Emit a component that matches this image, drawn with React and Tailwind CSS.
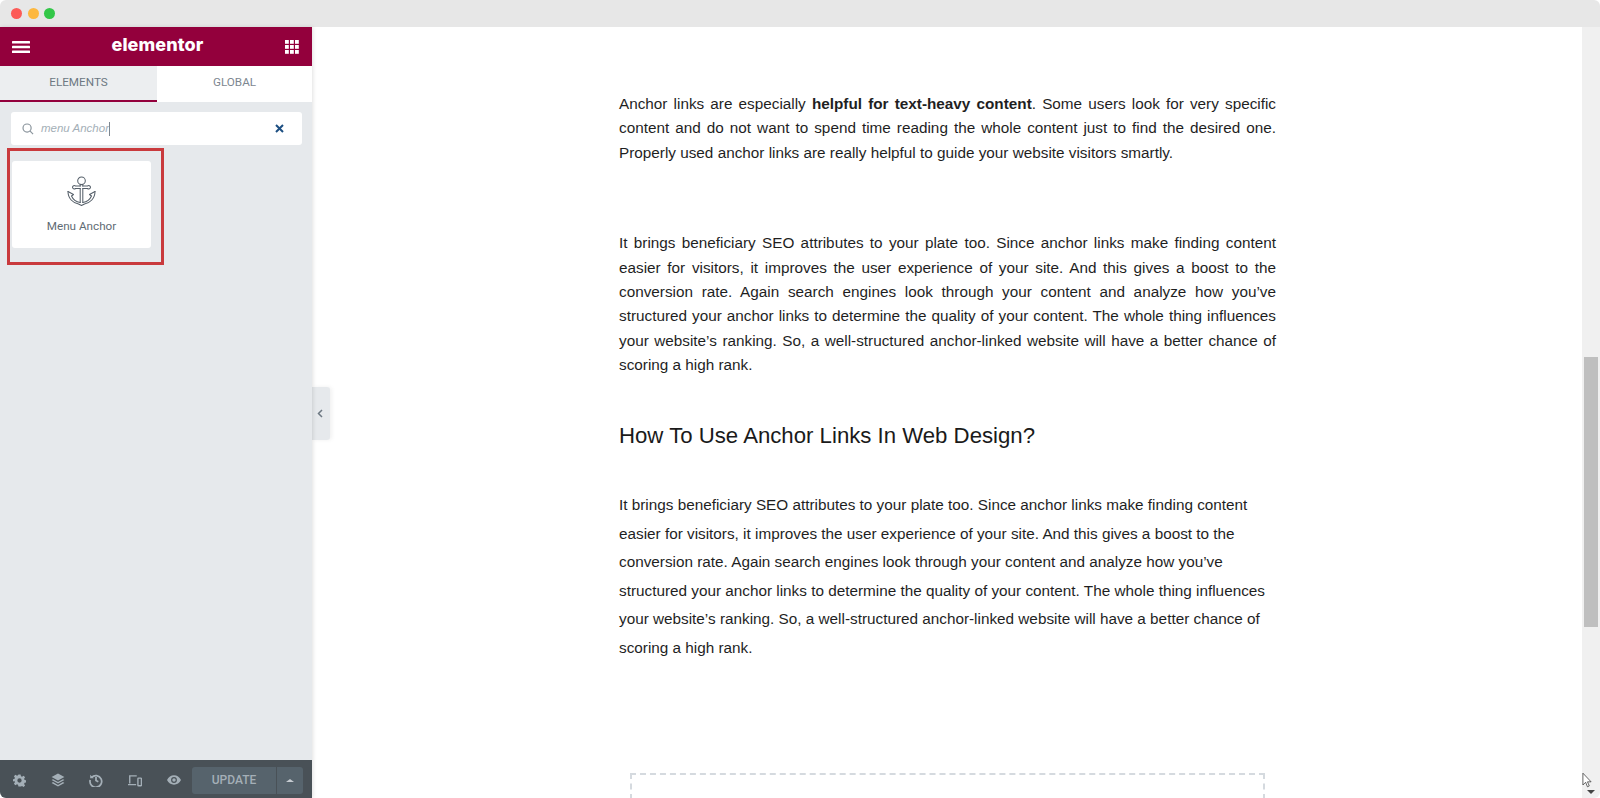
import React from "react";

function JLine({ children, last }) {
  return (
    <div className={last ? "h-[24.4px] whitespace-nowrap" : "h-[24.4px] [text-align:justify] [text-align-last:justify]"}>{children}</div>
  );
}

function FooterIcon({ children }) {
  return <div className="w-[38.6px] h-full flex items-center justify-center pt-[2px] text-[#a4afb7]">{children}</div>;
}

export default function App() {
  return (
    <div className="relative w-[1600px] h-[798px] overflow-hidden bg-white rounded-[6px] flex flex-col font-['Liberation_Sans',Arial,sans-serif]">
      <div className="h-[27px] shrink-0 bg-[#e7e7e7] flex items-center gap-[5.7px] pl-[11px] pb-[1px]">
        <span className="w-[11px] h-[11px] rounded-full bg-[#fc5b57]" />
        <span className="w-[11px] h-[11px] rounded-full bg-[#fdb83f]" />
        <span className="w-[11px] h-[11px] rounded-full bg-[#33c748]" />
      </div>
      <div className="flex-1 flex min-h-0">
        <aside className="w-[312px] shrink-0 bg-[#e6e9ec] flex flex-col shadow-[1px_0_4px_rgba(0,0,0,0.12)] z-10">
          <div className="h-[39px] shrink-0 bg-[#93003c] flex items-center justify-between pl-[12px] pr-[13px] text-white">
            <svg width="18" height="12" viewBox="0 0 18 12" fill="#fff"><rect y="0" width="18" height="2.4" rx="0.5" /><rect y="4.800" width="18" height="2.400" rx="0.5" /><rect y="9.600" width="18" height="2.400" rx="0.5" /></svg>
            <span className="text-[18px] font-extrabold tracking-[0.1px] leading-none font-['Inter',sans-serif] -mt-[4px]">elementor</span>
            <svg width="14" height="14" viewBox="0 0 14 14" fill="#fff">
              {[0, 5, 10].map((y) => [0, 5, 10].map((x) => <rect key={x + "-" + y} x={x} y={y} width="3.8" height="3.8" />))}
            </svg>
          </div>
          <div className="h-[36px] shrink-0 flex text-[11.7px] font-['Roboto',sans-serif] text-[#6d7882]">
            <div className="w-[157px] flex items-center justify-center border-b-2 border-[#93003c] bg-[#eceef0]">ELEMENTS</div>
            <div className="w-[155px] flex items-center justify-center border-b-2 border-transparent bg-white text-[#7d8790]">GLOBAL</div>
          </div>
          <div className="mt-[10px] ml-[11px] mr-[10px] h-[33px] shrink-0 bg-white rounded-[3px] flex items-center pl-[11px] pr-[18px]">
            <svg width="12" height="12" viewBox="0 0 13 13" fill="none" stroke="#8a949c" strokeWidth="1.3"><circle cx="5.500" cy="5.500" r="4.400" /><path d="M8.800 8.800L12 12" /></svg>
            <span className="ml-[7px] text-[11.5px] italic text-[#a4afb7]">menu Anchor</span>
            <span className="w-px h-[14px] bg-[#7d8790]" />
            <svg className="ml-auto" width="9" height="9" viewBox="0 0 9 9" fill="none" stroke="#1d4f82" strokeWidth="2"><path d="M1 1l7 7M8 1l-7 7" /></svg>
          </div>
          <div className="relative mt-[3px] ml-[7px] w-[157px] h-[117px] shrink-0 border-[3px] border-[#c93a3d] bg-[#e6e9ec] pt-[10px] pl-[2px]">
            <div className="w-[139px] h-[87px] bg-white rounded-[3px] flex flex-col items-center pt-[15px]">
              <svg width="29" height="30" viewBox="0 0 29 30" fill="none" stroke="#56606a" strokeWidth="1.050" strokeLinejoin="round" strokeLinecap="round">
                <circle cx="14.500" cy="4.800" r="3.800" />
                <path d="M13.200 8.500V10M15.800 8.500V10" />
                <path d="M13.200 12.500V26.500M15.800 12.500V26.500" />
                <path d="M13.200 10H8.500a1.800 1.800 0 0 0-3 1.300 1.800 1.800 0 0 0 3 1.200H13.200" />
                <path d="M15.800 10H20.500a1.800 1.800 0 0 1 3 1.300 1.800 1.800 0 0 1-3 1.200H15.800" />
                <path d="M1 15.500l5.500 3-2 1.500c1.500 3.500 4.500 5.800 8.700 6.500" />
                <path d="M28 15.500l-5.500 3 2 1.500c-1.500 3.500-4.500 5.800-8.700 6.500" />
                <path d="M1 15.500c0 7 5 11.500 10.500 12.500l3 1.500 3-1.500c5.500-1 10.500-5.500 10.500-12.500" />
              </svg>
              <span className="mt-[12px] text-[11.7px] font-['Roboto',sans-serif] text-[#5f6b74]">Menu Anchor</span>
            </div>
          </div>
          <div className="mt-auto h-[38px] shrink-0 bg-[#495157] flex items-center">
            <div className="flex h-full items-center">
              <FooterIcon>
                <svg width="13" height="13" viewBox="0 0 24 24" fill="currentColor"><path fillRule="evenodd" d="M10 1h4l.7 3.200 2 .9 2.800-1.800 2.800 2.800-1.800 2.800.9 2 3.200.7v4l-3.200.7-.9 2 1.800 2.800-2.800 2.800-2.800-1.800-2 .9L14 23h-4l-.7-3.200-2-.9-2.800 1.800-2.800-2.800 1.800-2.800-.9-2L-.6 13.800v-4l3.200-.7.9-2L1.700 4.300 4.500 1.500l2.800 1.800 2-.9zM12 8a4 4 0 1 0 0 8 4 4 0 0 0 0-8z" /></svg>
              </FooterIcon>
              <FooterIcon>
                <svg width="14" height="14" viewBox="0 0 24 24" fill="currentColor"><path d="M12 1L1 7l11 6 11-6z" /><path d="M3.500 10.600L1 12l11 6 11-6-2.500-1.400L12 15.500z" /><path d="M3.500 15.600L1 17l11 6 11-6-2.500-1.400L12 20.500z" /></svg>
              </FooterIcon>
              <FooterIcon>
                <svg width="14" height="14" viewBox="0 0 24 24" fill="none" stroke="currentColor" strokeWidth="3"><path d="M4.500 7.500A10 10 0 1 1 2 12" /><path d="M12 7v6l4 2" /><path d="M2 3v6h6" fill="currentColor" stroke="none" /></svg>
              </FooterIcon>
              <FooterIcon>
                <svg width="14" height="13" viewBox="0 0 24 22" fill="none" stroke="currentColor" strokeWidth="2.400"><path d="M15 3H3v13" /><path d="M0 18h14" /><rect x="17" y="7" width="6" height="13" rx="1" /></svg>
              </FooterIcon>
              <FooterIcon>
                <svg width="14" height="10" viewBox="0 0 24 16" fill="currentColor"><path fillRule="evenodd" d="M12 0C7 0 2.500 3 0 8c2.500 5 7 8 12 8s9.500-3 12-8c-2.500-5-7-8-12-8zm0 3a5 5 0 1 1 0 10 5 5 0 0 1 0-10z" /><circle cx="12" cy="8" r="3" /></svg>
              </FooterIcon>
            </div>
            <div className="ml-[-1px] mt-[2px] flex h-[27px] w-[111px] rounded-[3px] bg-[#56636c] text-[#a4afb7] font-['Roboto',sans-serif]">
              <div className="w-[85px] flex items-center justify-center text-[12px] font-medium border-r border-[#495157]">UPDATE</div>
              <div className="flex-1 flex items-center justify-center">
                <span className="w-0 h-0 border-x-[4px] border-x-transparent border-b-[3px] border-b-[#c6ccd1]" />
              </div>
            </div>
          </div>
        </aside>

        <main className="relative flex-1 min-w-0 bg-white flex">
          <div className="absolute left-0 top-[360px] w-[18px] h-[53px] bg-[#e6e9ec] rounded-r-[3px] flex items-center justify-center pr-[2px] shadow-[2px_0_4px_rgba(0,0,0,0.06)] text-[#6d7882]">
            <svg width="6" height="9" viewBox="0 0 6 9" fill="none" stroke="currentColor" strokeWidth="1.500"><path d="M5 1L1.500 4.500 5 8" /></svg>
          </div>
          <div className="flex-1 min-w-0">
            <div className="ml-[307px] w-[657px] pt-[65px] text-[15.3px] text-[#1f1f1f]">
              <div className="leading-[24.4px]">
                <JLine>Anchor links are especially <b className="font-bold">helpful for text-heavy content</b>. Some users look for very specific</JLine>
                <JLine>content and do not want to spend time reading the whole content just to find the desired one.</JLine>
                <JLine last>Properly used anchor links are really helpful to guide your website visitors smartly.</JLine>
              </div>
              <div className="mt-[66px] leading-[24.4px]">
                <JLine>It brings beneficiary SEO attributes to your plate too. Since anchor links make finding content</JLine>
                <JLine>easier for visitors, it improves the user experience of your site. And this gives a boost to the</JLine>
                <JLine>conversion rate. Again search engines look through your content and analyze how you’ve</JLine>
                <JLine>structured your anchor links to determine the quality of your content. The whole thing influences</JLine>
                <JLine>your website’s ranking. So, a well-structured anchor-linked website will have a better chance of</JLine>
                <JLine last>scoring a high rank.</JLine>
              </div>
              <h2 className="mt-[43px] text-[22.2px] leading-[30px] font-normal text-[#1a1a1a]">How To Use Anchor Links In Web Design?</h2>
              <div className="mt-[40.5px] leading-[28.500px]">
                <p>It brings beneficiary SEO attributes to your plate too. Since anchor links make finding content</p>
                <p>easier for visitors, it improves the user experience of your site. And this gives a boost to the</p>
                <p>conversion rate. Again search engines look through your content and analyze how you’ve</p>
                <p>structured your anchor links to determine the quality of your content. The whole thing influences</p>
                <p>your website’s ranking. So, a well-structured anchor-linked website will have a better chance of</p>
                <p>scoring a high rank.</p>
              </div>
              <div className="mt-[110.5px] ml-[11px] w-[635px] h-[100px] border-2 border-dashed border-[#d5dadf]" />
            </div>
          </div>
          <div className="w-[18px] shrink-0 bg-[#f0f0f0] relative">
            <div className="absolute top-[330px] left-[2px] w-[14px] h-[270px] bg-[#bfbfbf]" />
            <span className="absolute bottom-[4px] left-[5px] w-0 h-0 border-x-[4px] border-x-transparent border-t-[4px] border-t-[#444]" />
          </div>
          <svg className="absolute right-[8px] bottom-[10px]" width="10" height="16" viewBox="0 0 11 17" fill="#fff" stroke="#333" strokeWidth="0.8"><path d="M1 1v13l3-3 2 5 2-1-2-4.500h4z" /></svg>
        </main>
      </div>
    </div>
  );
}
